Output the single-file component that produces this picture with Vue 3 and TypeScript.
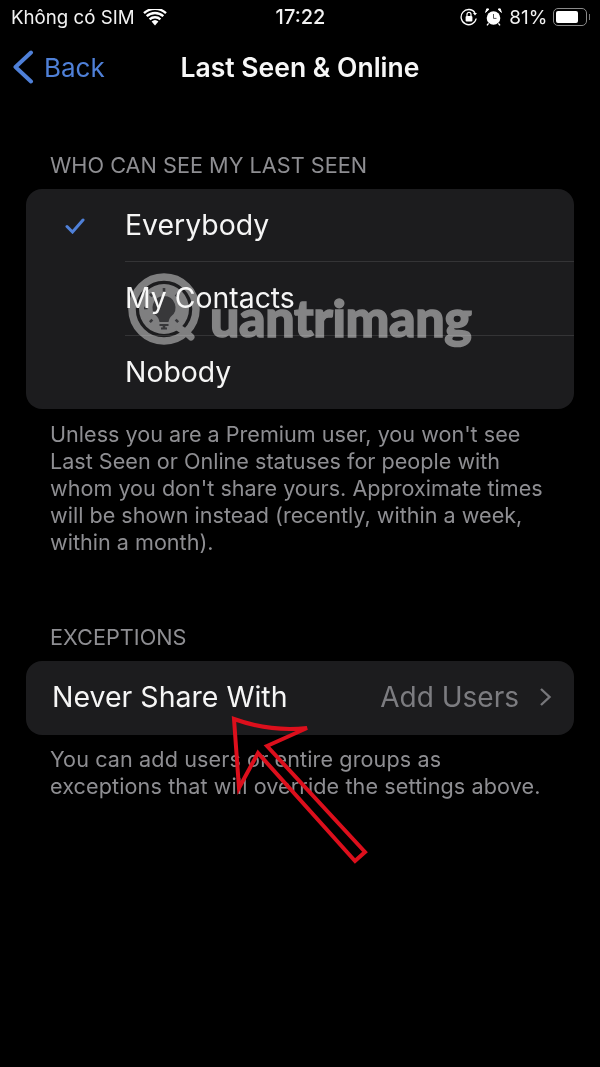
<script setup lang="ts">
const options = [
  { label: 'Everybody', checked: true },
  { label: 'My Contacts', checked: false },
  { label: 'Nobody', checked: false },
]
const rays = [0, 45, 90, 135, 225, 270, 315]
</script>

<template>
  <div class="screen">
    <div class="status">
      <div class="status-left">
        <span>Không có SIM</span>
        <svg class="wifi" width="24" height="17" viewBox="0 0 24 17">
          <path d="M12 16.5l-3.4-3.9a5 5 0 0 1 6.8 0z" fill="#fff" />
          <path d="M6.6 10.4a8 8 0 0 1 10.8 0M3.7 7.2a12.2 12.2 0 0 1 16.6 0M1 4.2a16.2 16.2 0 0 1 22 0" fill="none" stroke="#fff" stroke-width="2.4" />
        </svg>
      </div>
      <div class="status-time">17:22</div>
      <div class="status-right">
        <svg width="18" height="18" viewBox="0 0 18 18">
          <path d="M16.2 10.5A7.6 7.6 0 1 1 15 4.8" fill="none" stroke="#fff" stroke-width="1.3" />
          <path d="M13 5h4l-2 2.4z" fill="#fff" />
          <rect x="5.6" y="8" width="6.8" height="5.4" rx="1" fill="#fff" />
          <path d="M7 8V6.4a2 2 0 0 1 4 0V8" fill="none" stroke="#fff" stroke-width="1.2" />
        </svg>
        <svg class="alarm" width="17" height="18" viewBox="0 0 17 18">
          <circle cx="8.5" cy="10" r="6.8" fill="#fff" />
          <path d="M8.5 6v4.4h3" fill="none" stroke="#555" stroke-width="1" />
          <path d="M0.6 4.4L4 1.2 1.8 0.8zM16.4 4.4L13 1.2 15.2 0.8z" fill="#fff" stroke="#fff" />
          <path d="M3.6 15.4l-1.6 2M13.4 15.4l1.6 2" stroke="#fff" stroke-width="1.4" />
        </svg>
        <span class="pct">81%</span>
        <span class="battery"><span class="battery-fill"></span></span>
        <span class="battery-cap"></span>
      </div>
    </div>

    <div class="nav">
      <div class="back">
        <svg width="22" height="34" viewBox="0 0 22 34">
          <path d="M19 2.5L3.5 17 19 31.5" fill="none" stroke="#4f80d8" stroke-width="4" stroke-linecap="round" stroke-linejoin="round" />
        </svg>
        <span>Back</span>
      </div>
      <div class="title">Last Seen &amp; Online</div>
    </div>

    <div class="section-head first">WHO CAN SEE MY LAST SEEN</div>
    <div class="card">
      <div v-for="option in options" :key="option.label" class="row">
        <div class="check">
          <svg v-if="option.checked" width="20" height="16" viewBox="0 0 20 16">
            <path d="M2 8.5l5.5 5.5L18 2" fill="none" stroke="#4f80d8" stroke-width="3" stroke-linecap="round" />
          </svg>
        </div>
        <div class="row-label">{{ option.label }}</div>
      </div>
    </div>
    <p class="foot">Unless you are a Premium user, you won't see Last Seen or Online statuses for people with whom you don't share yours. Approximate times will be shown instead (recently, within a week, within a month).</p>

    <div class="section-head second">EXCEPTIONS</div>
    <div class="card single">
      <span class="single-label">Never Share With</span>
      <span class="single-value">Add Users</span>
      <svg width="13" height="20" viewBox="0 0 13 20">
        <path d="M2 2l8.500 8L2 18" fill="none" stroke="#77777b" stroke-width="2.4" />
      </svg>
    </div>
    <p class="foot last">You can add users or entire groups as exceptions that will override the settings above.</p>

    <div class="watermark">
      <svg width="76" height="76" viewBox="0 0 76 76">
        <circle cx="37" cy="37" r="32" fill="none" stroke="#6f6f6f" stroke-width="7.5" />
        <circle cx="37" cy="37" r="25" fill="#6f6f6f" />
        <path d="M52 56q8 5 12 9" fill="none" stroke="#6f6f6f" stroke-width="7" stroke-linecap="round" />
        <path d="M37 24a11.500 11.500 0 0 0-7 20.600c1.500 1.400 2 3.400 2.500 5.400h9c.5-2 1-4 2.500-5.400a11.500 11.500 0 0 0-7-20.600z" fill="#1f1f20" />
        <path d="M32.500 53h9M34 56.500h6" stroke="#1f1f20" stroke-width="2" />
        <path v-for="a in rays" :key="a" d="M37 16v3.500" stroke="#1f1f20" stroke-width="2.600" :transform="`rotate(${a - 90} 37 36)`" />
      </svg>
      <span>uantrimang</span>
    </div>

    <svg class="arrow" width="600" height="1067" viewBox="0 0 600 1067">
      <path d="M234 719Q270 732 307 728Q285 738 267 746L365 852L355 861L258 753L239 788Z" fill="none" stroke="#dc0f1c" stroke-width="4" />
    </svg>
  </div>
</template>

<style>
html, body {
  margin: 0;
  background: #000;
}
</style>

<style scoped>
.screen {
  position: relative;
  width: 600px;
  height: 1067px;
  overflow: hidden;
  background: #000;
  color: #fff;
  font-family: Inter, "Noto Sans", sans-serif;
}
.status {
  display: grid;
  grid-template-columns: 1fr auto 1fr;
  align-items: center;
  height: 34px;
  padding: 0 10px 0 11px;
  font-size: 18.7px;
  color: #f2f2f2;
}
.status-left {
  display: flex;
  align-items: center;
  gap: 8px;
}
.status-time {
  font-size: 20px;
  font-weight: 500;
}
.status-right {
  display: flex;
  align-items: center;
  justify-content: flex-end;
  gap: 7px;
}
.pct {
  font-size: 19px;
}
.battery {
  display: block;
  box-sizing: border-box;
  width: 34px;
  height: 18px;
  padding: 2px;
  margin-left: -2px;
  border: 1.5px solid #8a8a8a;
  border-radius: 5px;
}
.battery-fill {
  display: block;
  width: 80%;
  height: 100%;
  background: #fff;
  border-radius: 2px;
}
.battery-cap {
  width: 1.5px;
  height: 6px;
  margin-left: -5px;
  background: #777;
}
.nav {
  position: relative;
  display: flex;
  align-items: center;
  height: 66px;
}
.back {
  display: flex;
  align-items: center;
  gap: 10px;
  padding-left: 12px;
  font-size: 26px;
  color: #4f80d8;
}
.title {
  position: absolute;
  left: 0;
  right: 0;
  text-align: center;
  font-size: 26.5px;
  font-weight: 600;
  color: #f7f7f7;
}
.section-head {
  padding-left: 50px;
  font-size: 21.7px;
  line-height: 26px;
  color: #8e8e92;
}
.first {
  margin-top: 52px;
}
.second {
  margin-top: 68px;
}
.card {
  margin: 0 26px;
  background: #1c1c1e;
  border-radius: 16px;
}
.first + .card {
  margin-top: 11px;
}
.row {
  display: flex;
  align-items: stretch;
  height: 73.33px;
}
.check {
  display: flex;
  align-items: center;
  width: 99px;
  flex: none;
  padding-left: 39px;
  box-sizing: border-box;
}
.row-label {
  flex: 1;
  display: flex;
  align-items: center;
  padding-bottom: 2px;
  box-sizing: border-box;
  font-size: 28.4px;
  color: #f5f5f5;
  border-bottom: 1px solid #343436;
}
.row:last-child .row-label {
  border-bottom: none;
}
.foot {
  margin: 12px 0 0;
  padding: 0 50px;
  font-size: 21.6px;
  line-height: 27px;
  color: #8e8e92;
}
.last {
  margin-top: 11px;
  letter-spacing: 0.1px;
}
.single {
  display: flex;
  align-items: center;
  height: 74px;
  margin-top: 11px;
  padding: 0 22px 2px 26px;
  box-sizing: border-box;
}
.single-label {
  flex: 1;
  font-size: 28.5px;
  color: #f5f5f5;
}
.single-value {
  margin-right: 20px;
  font-size: 28px;
  color: #7c7c80;
}
.watermark {
  position: absolute;
  left: 127px;
  top: 272px;
  display: flex;
  align-items: flex-end;
  color: #757575;
  font-family: Lato, sans-serif;
  font-weight: 900;
  font-size: 52px;
  line-height: 62px;
  letter-spacing: -0.4px;
  -webkit-text-stroke: 1.5px #757575;
  mix-blend-mode: screen;
}
.watermark span {
  margin-left: 7px;
}
.arrow {
  position: absolute;
  left: 0;
  top: 0;
  pointer-events: none;
}
</style>
